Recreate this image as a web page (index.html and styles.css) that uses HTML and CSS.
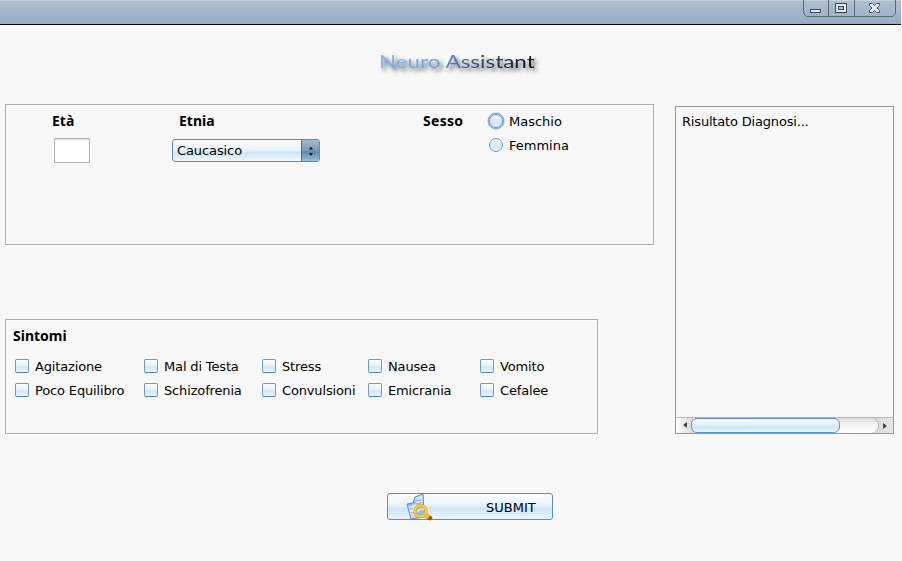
FILE: index.html
```html
<!DOCTYPE html>
<html lang="it">
<head>
<meta charset="utf-8">
<title>Neuro Assistant</title>
<link rel="stylesheet" href="styles.css">
</head>
<body>
<header class="titlebar">
  <svg class="controls" width="94" height="17" viewBox="0 0 94 17" shape-rendering="crispEdges">
    <path d="M.5 0v13.500l3 3h86l3-3V0M25.500 0v16M51.500 0v16" fill="none" stroke="#59687a"/>
    <rect x="7.500" y="9.500" width="10" height="3" rx="1" fill="#e3e8ef" stroke="#3c4652"/>
    <rect x="32.500" y="3.500" width="11" height="9" rx="1" fill="#e3e8ef" stroke="#3c4652"/>
    <rect x="35.500" y="6.500" width="5" height="3" fill="#b3c3d5" stroke="#3c4652"/>
    <path d="M66.500 3.500h3l2 2 2-2h3v2l-2.500 2.500 2.500 2.500v2h-3l-2-2-2 2h-3v-2l2.500-2.500-2.500-2.500z" fill="#e3e8ef" stroke="#3c4652" stroke-width=".9" shape-rendering="auto"/>
  </svg>
</header>
<main class="content">
  <h1 class="logo"><span>Neuro Assistant</span></h1>
  <div class="columns">
    <div class="forms">
      <section class="panel patient">
        <div class="field age"><h2>Età</h2><input class="age-input" type="text" aria-label="Età"></div>
        <div class="field ethnicity"><h2>Etnia</h2>
          <div class="select"><span>Caucasico</span><i class="stepper"><svg width="18" height="21" viewBox="0 0 18 21"><path d="M7 9.500l2-3 2 3zM7 13l2 3 2-3z" fill="#101820"/></svg></i></div>
        </div>
        <h2 class="sex-title">Sesso</h2>
        <div class="radios">
          <label class="option"><i class="radio focused"></i><span>Maschio</span></label>
          <label class="option"><i class="radio"></i><span>Femmina</span></label>
        </div>
      </section>
      <section class="panel symptoms">
        <h2>Sintomi</h2>
        <div class="checks">
          <label class="option"><i class="box"></i><span>Agitazione</span></label>
          <label class="option"><i class="box"></i><span>Mal di Testa</span></label>
          <label class="option"><i class="box"></i><span>Stress</span></label>
          <label class="option"><i class="box"></i><span>Nausea</span></label>
          <label class="option"><i class="box"></i><span>Vomito</span></label>
          <label class="option"><i class="box"></i><span>Poco Equilibro</span></label>
          <label class="option"><i class="box"></i><span>Schizofrenia</span></label>
          <label class="option"><i class="box"></i><span>Convulsioni</span></label>
          <label class="option"><i class="box"></i><span>Emicrania</span></label>
          <label class="option"><i class="box"></i><span>Cefalee</span></label>
        </div>
      </section>
    </div>
    <section class="result">
      <p>Risultato Diagnosi...</p>
      <div class="scrollbar">
        <svg class="arrow" width="15" height="14" viewBox="0 0 15 14"><path d="M11 4v6L7 7z" fill="#444"/></svg>
        <div class="track"><div class="thumb"></div></div>
        <svg class="arrow" width="14" height="14" viewBox="0 0 14 14"><path d="M4 5v6l4-3z" fill="#444"/></svg>
      </div>
    </section>
  </div>
  <button class="submit" type="button">
    <svg width="29" height="28" viewBox="0 0 29 28">
      <defs>
        <linearGradient id="paper" x2="1" y2="1"><stop stop-color="#9dbdf6"/><stop offset=".5" stop-color="#e2edff"/><stop offset="1" stop-color="#7ba4ee"/></linearGradient>
      </defs>
      <path d="M2 11l6-1 2-6 8-3 1 23-13 2z" fill="url(#paper)" stroke="#5c7fd6"/>
      <path d="M2 11l6-1 2-6 1 7-8 2z" fill="#7298e8" opacity=".65"/>
      <path d="M5 16l3-.5M5.500 20l3-.5M11 8l5-1M11 11l5-1" stroke="#85a6ea"/>
      <path d="M21 22l4 3" stroke="#a65415" stroke-width="4.500" stroke-linecap="round"/>
      <path d="M19 20l5 4" stroke="#ffc51b" stroke-width="4"/>
      <circle cx="15.500" cy="18" r="5.500" fill="#8fbcf8" stroke="#e89e08" stroke-width="3"/>
      <circle cx="15.500" cy="18" r="5.500" fill="none" stroke="#ffd631" stroke-width="1.700"/>
      <path d="M12.500 19c1-3 4-3 6-3" fill="none" stroke="#edf6ff" stroke-width="1.500"/>
    </svg>
    <span>SUBMIT</span>
  </button>
</main>
</body>
</html>
```
FILE: styles.css
```css
* { box-sizing: border-box; }
body {
  margin: 0;
  width: 902px;
  height: 561px;
  overflow: hidden;
  background: #f8f8f8;
  color: #000;
  font: 13px/16px "DejaVu Sans", sans-serif;
}
h1, h2, p { margin: 0; }
i { display: block; flex: none; }
svg { display: block; flex: none; }
.titlebar {
  display: flex;
  justify-content: flex-end;
  height: 25px;
  margin-right: 1px;
  padding-right: 4px;
  border-top: 1px solid #c8d2dd;
  border-bottom: 1px solid #000;
  background: linear-gradient(#afbfd1, #96adc6);
}
.controls { margin-top: -1px; }
.content { padding: 0 8px 0 5px; }
.logo {
  height: 79px;
  padding: 24px 0 0 374px;
  font: 400 18px/24px Lato, sans-serif;
  filter: drop-shadow(3px 3px 2px rgba(0, 0, 0, .65));
}
.logo span {
  display: inline-block;
  transform: scaleX(1.245);
  transform-origin: left;
  background: linear-gradient(90deg, #80b4ff, #6f9fe8 35%, #35527f 62%, #080d18);
  -webkit-background-clip: text;
  background-clip: text;
  color: transparent;
}
.columns { display: flex; justify-content: space-between; height: 330px; }
.forms { display: flex; flex-direction: column; justify-content: space-between; width: 649px; }
.panel { border: 1px solid #adadad; box-shadow: 1px 1px #fff, inset 1px 1px #fff; }
h2 { font: 700 14px/16px "Noto Sans", sans-serif; }
.patient { display: flex; height: 141px; padding-top: 8px; }
.field { flex: none; }
.age { width: 118px; padding-left: 46px; }
.age-input {
  display: block;
  width: 36px;
  height: 25px;
  margin: 9px 0 0 2px;
  border: 1px solid #b5b5b5;
  background: #fff;
  box-shadow: inset 0 1px 1px #ddd;
}
.ethnicity { width: 251px; margin-left: 48px; }
.ethnicity h2 { padding-left: 7px; }
.select {
  display: flex;
  justify-content: space-between;
  width: 148px;
  height: 23px;
  margin-top: 10px;
  padding-left: 4px;
  overflow: hidden;
  border: 1px solid #5d89c8;
  border-radius: 3px;
  background: linear-gradient(#fafdff, #eaf4fc 48%, #cfe5f6 60%, #eefaff);
  line-height: 22px;
  letter-spacing: -.1px;
}
.stepper {
  width: 18px;
  border-left: 1px solid #49749f;
  background: linear-gradient(#a3b9d0, #7c9dbe 48%, #6289b1 58%, #9abddc);
}
.sex-title { width: 65px; letter-spacing: .3px; }
.option {
  display: flex;
  align-items: center;
  gap: 6px;
  height: 24px;
  white-space: nowrap;
  letter-spacing: -.15px;
}
.option span { padding-top: 2px; }
.radios { margin-top: -4px; }
.radios .option { letter-spacing: 0; }
.radio {
  width: 14px;
  height: 14px;
  margin-left: 1px;
  border: 1px solid #7296c8;
  border-radius: 50%;
  background: linear-gradient(#f1f8fd, #d4e9f9 65%, #e8f7ff);
}
.radio.focused { box-shadow: 0 0 0 1.500px #8db2df; border-color: #6494ce; }
.symptoms { width: 593px; height: 115px; padding: 8px 0 0 9px; }
.symptoms h2 { margin-left: -2px; }
.checks { display: grid; grid-template-columns: 129px 118px 106px 112px 1fr; margin-top: 10px; }
.box {
  width: 14px;
  height: 14px;
  border: 1px solid #7098d1;
  border-bottom-color: #4f7fc0;
  border-radius: 2px;
  background: linear-gradient(#f8fcff, #e7f3fd 45%, #d0e7f8 60%, #eaf8ff);
}
.result {
  display: flex;
  flex-direction: column;
  justify-content: space-between;
  width: 219px;
  height: 328px;
  margin-top: 2px;
  padding-top: 7px;
  border: 1px solid #9298a8;
}
.result p { padding-left: 6px; letter-spacing: -.18px; }
.scrollbar {
  display: flex;
  height: 16px;
  border-top: 1px solid #b8b8b8;
  background: linear-gradient(90deg, #fff, #ddd 7%, #ddd 93%, #e8e8e8);
}
.track {
  flex: 1;
  border-radius: 7px;
  background: linear-gradient(#dcdcdc, #f4f4f4 45%, #fff);
  box-shadow: inset -1px 0 #b5b5b5;
}
.thumb {
  width: 149px;
  height: 15px;
  border: 1px solid #5e90cf;
  border-radius: 6px;
  background: linear-gradient(#fafdff, #e5f2fb 45%, #cde5f6 60%, #ecfaff);
}
.submit {
  display: flex;
  align-items: center;
  width: 166px;
  height: 27px;
  margin: 59px 0 0 382px;
  padding: 0 0 0 17px;
  border: 1px solid #5d8bc8;
  border-radius: 3px;
  background: linear-gradient(#fafdff, #e6f3fc 46%, #cde4f5 58%, #e8f8ff);
  color: #000;
  font: 13px/16px "DejaVu Sans", sans-serif;
}
.submit span { margin: 2px 0 0 52px; }
```
